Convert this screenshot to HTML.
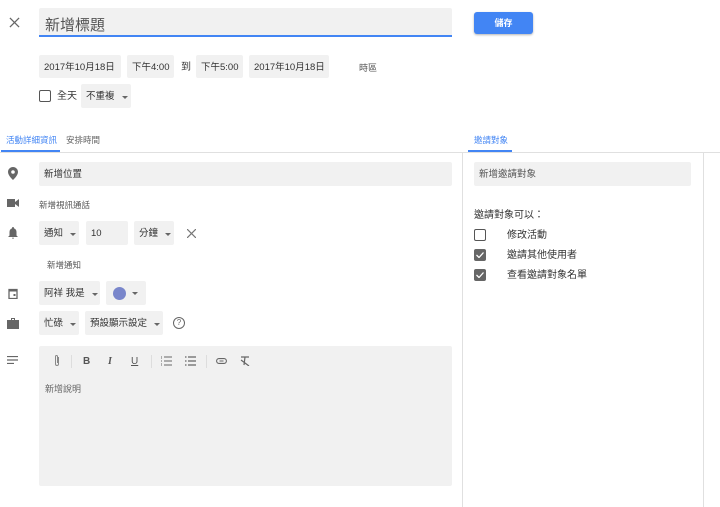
<!DOCTYPE html>
<html><head><meta charset="utf-8"><style>
*{box-sizing:border-box;margin:0;padding:0}
body{width:720px;height:507px;background:#fff;position:relative;overflow:hidden;font-family:"Liberation Sans","Noto Sans CJK TC",sans-serif;color:#333;font-size:10px;white-space:nowrap;line-height:12px}
.a{position:absolute}
.box{position:absolute;background:#f1f1f1;border-radius:2px;display:flex;align-items:center;padding:2px 0 0 5px;font-size:9.5px;color:#333;white-space:nowrap}
.caret{display:inline-block;width:0;height:0;border-left:3px solid transparent;border-right:3px solid transparent;border-top:3px solid #666;margin-left:7px}
.cb{position:absolute;width:12px;height:12px;border:1.5px solid #555;border-radius:2px}
.cbc{position:absolute;width:12px;height:12px;background:#666;border-radius:2px}
.ico{position:absolute;fill:#666}
</style></head><body>
<svg class="a" style="left:9px;top:17px" width="11" height="11" viewBox="0 0 12 12"><path d="M1 1L11 11M11 1L1 11" stroke="#666" stroke-width="1.4"/></svg>
<div class="a" style="left:39px;top:8px;width:413px;height:29px;background:#f1f1f1;border-bottom:2px solid #4285f4;border-radius:2px 2px 0 0;font-size:15px;color:#555;padding:10px 0 0 6px;line-height:16px">新增標題</div>
<div class="a" style="left:474px;top:12px;width:59px;height:22px;background:#4285f4;border-radius:3px;box-shadow:0 1px 2px rgba(0,0,0,.3);color:#fff;font-size:9px;font-weight:bold;text-align:center;line-height:22px">儲存</div>

<div class="box" style="left:39px;top:55px;width:82px;height:23px">2017年10月18日</div>
<div class="box" style="left:127px;top:55px;width:47px;height:23px">下午4:00</div>
<div class="a" style="left:181px;top:62px">到</div>
<div class="box" style="left:196px;top:55px;width:47px;height:23px">下午5:00</div>
<div class="box" style="left:249px;top:55px;width:80px;height:23px">2017年10月18日</div>
<div class="a" style="left:359px;top:62px;font-size:9px;color:#555">時區</div>

<div class="cb" style="left:39px;top:90px"></div>
<div class="a" style="left:57px;top:91px">全天</div>
<div class="box" style="left:81px;top:84px;width:50px;height:24px">不重複<span class="caret"></span></div>

<div class="a" style="left:6px;top:134px;font-size:8.5px;color:#4285f4">活動詳細資訊</div>
<div class="a" style="left:66px;top:134px;font-size:8.5px;color:#666">安排時間</div>
<div class="a" style="left:1px;top:150px;width:59px;height:2px;background:#4285f4"></div>
<div class="a" style="left:474px;top:134px;font-size:8.5px;color:#4285f4">邀請對象</div>
<div class="a" style="left:468px;top:150px;width:44px;height:2px;background:#4285f4"></div>
<div class="a" style="left:0;top:152px;width:720px;height:1px;background:#e0e0e0"></div>
<div class="a" style="left:462px;top:152px;width:1px;height:355px;background:#e0e0e0"></div>
<div class="a" style="left:703px;top:152px;width:1px;height:355px;background:#e0e0e0"></div>

<svg class="ico" style="left:8px;top:167px" width="10" height="13" viewBox="0 0 10 13"><path d="M5 0C2.2 0 0 2.2 0 5c0 3.5 5 8 5 8s5-4.5 5-8C10 2.2 7.8 0 5 0zm0 6.8A1.8 1.8 0 1 1 5 3.2a1.8 1.8 0 0 1 0 3.6z"/></svg>
<div class="box" style="left:39px;top:162px;width:413px;height:24px">新增位置</div>
<svg class="ico" style="left:7px;top:199px" width="12" height="8" viewBox="0 0 12 8"><rect width="8" height="8"/><path d="M8 3L12 0V8L8 5z"/></svg>
<div class="a" style="left:39px;top:199px;font-size:8.5px;color:#555">新增視訊通話</div>

<svg class="ico" style="left:8px;top:227px" width="10" height="12" viewBox="0 0 10 12"><path d="M5 0C4.4 0 4 .4 4 1v.4C2.3 1.9 1.5 3.3 1.5 5v3.5L0 10h10L8.5 8.5V5c0-1.7-.8-3.1-2.5-3.6V1c0-.6-.4-1-1-1zM4 10.7a1 1 0 0 0 2 0z"/></svg>
<div class="box" style="left:39px;top:221px;width:40px;height:24px">通知<span class="caret"></span></div>
<div class="box" style="left:86px;top:221px;width:42px;height:24px">10</div>
<div class="box" style="left:134px;top:221px;width:40px;height:24px">分鐘<span class="caret"></span></div>
<svg class="a" style="left:187px;top:229px" width="9" height="9" viewBox="0 0 9 9"><path d="M0 0L9 9M9 0L0 9" stroke="#777" stroke-width="1.2"/></svg>
<div class="a" style="left:47px;top:259px;font-size:8.5px;color:#555">新增通知</div>

<svg class="ico" style="left:8px;top:288px" width="10" height="11" viewBox="0 0 10 11"><path d="M1 1.5h8v9H1z" fill="none" stroke="#666" stroke-width="1.3"/><rect x="1" y="1.5" width="8" height="2"/><rect x="5.5" y="6" width="2" height="2"/></svg>
<div class="box" style="left:39px;top:281px;width:61px;height:24px">阿祥 我是<span class="caret"></span></div>
<div class="box" style="left:106px;top:281px;width:40px;height:24px;padding:0 0 0 7px"><span style="display:inline-block;width:13px;height:13px;border-radius:50%;background:#7986cb"></span><span class="caret" style="margin-left:6px"></span></div>

<svg class="ico" style="left:7px;top:318px" width="12" height="11" viewBox="0 0 12 11"><path d="M4 0h4v2h4v9H0V2h4zM5 1v1h2V1z"/></svg>
<div class="box" style="left:39px;top:311px;width:40px;height:24px">忙碌<span class="caret"></span></div>
<div class="box" style="left:85px;top:311px;width:78px;height:24px">預設顯示設定<span class="caret"></span></div>
<div class="a" style="left:173px;top:317px;width:12px;height:12px;border:1.2px solid #666;border-radius:50%;font-size:8px;text-align:center;line-height:10px;color:#666">?</div>

<svg class="a" style="left:7px;top:356px" width="11" height="8" viewBox="0 0 11 8"><path d="M0 .5h11M0 4h11M0 7.5h7" stroke="#666" stroke-width="1.2"/></svg>
<div class="a" style="left:39px;top:346px;width:413px;height:140px;background:#f1f1f1;border-radius:2px"></div>
<svg class="a" style="left:54px;top:354px" width="6" height="13" viewBox="0 0 6 13"><path d="M4.5 3v7a1.5 1.5 0 0 1-3 0V2.5a1 1 0 0 1 2 0V9" stroke="#888" stroke-width="1" fill="none"/></svg>
<div class="a" style="left:71px;top:355px;width:1px;height:13px;background:#ddd"></div>
<div class="a" style="left:83px;top:356px;font-size:10px;font-weight:bold;color:#555">B</div>
<div class="a" style="left:108px;top:356px;font-size:10px;font-weight:bold;font-style:italic;color:#555;font-family:'Liberation Serif',serif">I</div>
<div class="a" style="left:131px;top:356px;font-size:10px;color:#555;text-decoration:underline">U</div>
<div class="a" style="left:151px;top:355px;width:1px;height:13px;background:#ddd"></div>
<svg class="a" style="left:161px;top:356px" width="11" height="10" viewBox="0 0 11 10"><path d="M3 1h8M3 5h8M3 9h8M0 0v3M0 4v2M0 7v3" stroke="#666" stroke-width="1"/></svg>
<svg class="a" style="left:185px;top:356px" width="11" height="10" viewBox="0 0 11 10"><path d="M3 1h8M3 5h8M3 9h8M0 1h1.5M0 5h1.5M0 9h1.5" stroke="#666" stroke-width="1.2"/></svg>
<div class="a" style="left:206px;top:355px;width:1px;height:13px;background:#ddd"></div>
<svg class="a" style="left:216px;top:358px" width="11" height="6" viewBox="0 0 11 6"><rect x=".6" y=".6" width="9.8" height="4.8" rx="2.4" fill="none" stroke="#666" stroke-width="1.1"/><path d="M3.5 3h4" stroke="#666"/></svg>
<svg class="a" style="left:240px;top:356px" width="10" height="10" viewBox="0 0 10 10"><path d="M1 1h8M5 1L4 9M1 4l8 6" stroke="#666" stroke-width="1.2"/></svg>
<div class="a" style="left:45px;top:383px;font-size:9px;color:#666">新增說明</div>

<div class="box" style="left:474px;top:162px;width:217px;height:24px;font-size:9.5px;color:#555">新增邀請對象</div>
<div class="a" style="left:474px;top:210px;font-size:10px;color:#333">邀請對象可以：</div>
<div class="cb" style="left:474px;top:229px"></div>
<div class="a" style="left:507px;top:230px">修改活動</div>
<div class="cbc" style="left:474px;top:249px"></div><svg class="a" style="left:476px;top:252px" width="8" height="6" viewBox="0 0 8 6"><path d="M.5 3l2.5 2.5L7.5 .5" stroke="#fff" stroke-width="1.3" fill="none"/></svg>
<div class="a" style="left:507px;top:250px">邀請其他使用者</div>
<div class="cbc" style="left:474px;top:269px"></div><svg class="a" style="left:476px;top:272px" width="8" height="6" viewBox="0 0 8 6"><path d="M.5 3l2.5 2.5L7.5 .5" stroke="#fff" stroke-width="1.3" fill="none"/></svg>
<div class="a" style="left:507px;top:270px">查看邀請對象名單</div>
</body></html>
